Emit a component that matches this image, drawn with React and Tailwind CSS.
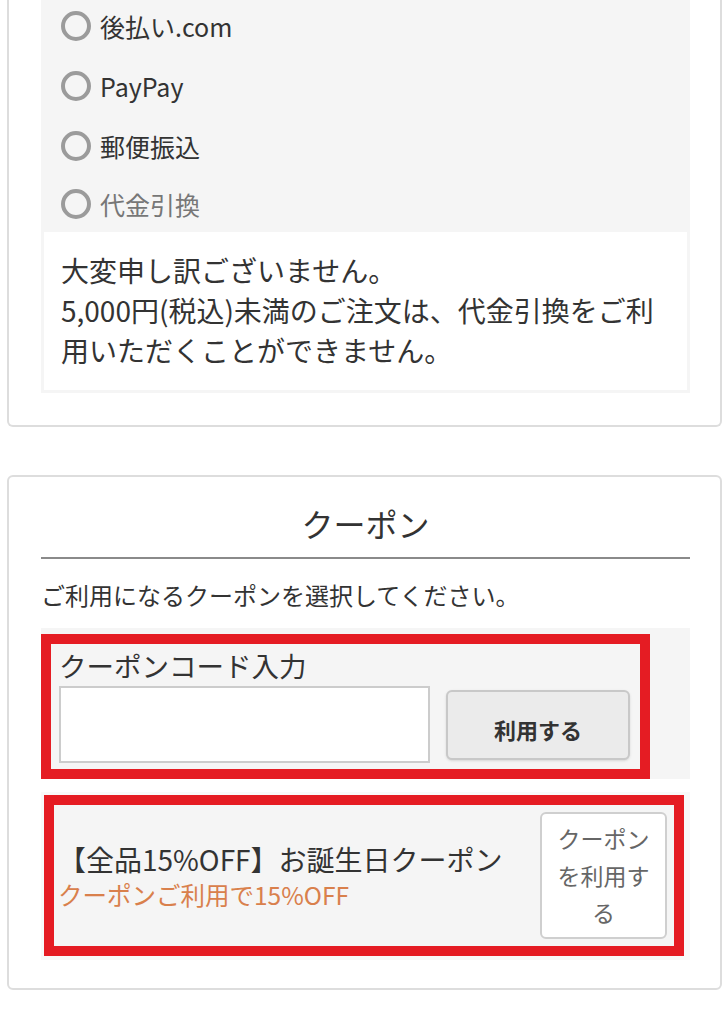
import React from 'react';

const font = { fontFamily: '"Noto Sans CJK JP", "Noto Sans", sans-serif' };

const methods = [
  { label: '後払い.com' },
  { label: 'PayPay' },
  { label: '郵便振込' },
  { label: '代金引換', disabled: true },
];

function Radio({ label, disabled, last }) {
  return (
    <label className={`flex items-center gap-[9px] pl-[17px] ${last ? 'h-[56px]' : 'h-[60px]'}`}>
      <span className="w-[30px] h-[30px] rounded-full border-[4px] border-[#9b9b9b] bg-[#f5f5f5] shrink-0" />
      <span className={`text-[25px] leading-[32px] ${disabled ? 'text-[#777]' : 'text-[#333]'}`}>{label}</span>
    </label>
  );
}

export default function App() {
  return (
    <div className="w-[725px] min-h-[1016px] bg-white text-[#333]" style={font}>
      {/* お支払い方法 (上部は画面外) */}
      <div className="ml-[7px] mr-[3px] border-x-2 border-b-2 border-[#dddddd] rounded-b-md pt-[4px] pl-[32px] pr-[30px] pb-[32px]">
        <div className="bg-[#f5f5f5] px-[3px] pb-[3px]">
          <div className="-mt-2">
            {methods.map((m, i) => (
              <Radio key={m.label} {...m} last={i === methods.length - 1} />
            ))}
          </div>
          <div className="bg-white pl-[17px] pr-[10px] pt-[18px] pb-[20px] text-[28px] leading-[40px] text-[#333]">
            <p>大変申し訳ございません。</p>
            <p>5,000円(税込)未満のご注文は、代金引換をご利用いただくことができません。</p>
          </div>
        </div>
      </div>

      {/* クーポン */}
      <div className="mt-[48px] ml-[7px] mr-[3px] border-2 border-[#dddddd] rounded-md pt-[22px] pl-[32px] pr-[30px] pb-[28px]">
        <h2 className="text-center text-[32px] leading-[48px] text-[#333]">クーポン</h2>
        <div className="mt-[10px] h-[2px] bg-[#8a8a8a]" />
        <p className="mt-[18px] text-[24px] leading-[36px] text-[#333]">ご利用になるクーポンを選択してください。</p>

        <div className="mt-[15px] bg-[#f5f5f5] pt-[6px] pr-[40px]">
          <div className="border-[10px] border-[#e51c23] pt-[3px] pb-[6px] pl-[8px] pr-[3px]">
            <div className="text-[27.5px] leading-[36px] text-[#333]">クーポンコード入力</div>
            <div className="mt-[3px] flex items-center gap-[16px]">
              <input type="text" className="w-[371px] h-[77px] bg-white border-2 border-[#cccccc] outline-none" />
              <button className="w-[184px] h-[70px] bg-[#ebebeb] border-2 border-[#c8c8c8] rounded-md shadow-sm pt-[10px] text-[22px] font-bold text-[#333]">
                利用する
              </button>
            </div>
          </div>
        </div>

        <div className="mt-[13px] bg-[#f9f9f9] pt-[3px] pl-[3px] pr-[6px] pb-[4px]">
          <div className="border-[10px] border-[#e51c23] bg-[#f5f5f5] flex items-center pl-[4px] pr-[7px] py-[7px]">
            <div className="flex-1">
              <div className="text-[28px] leading-[38px] text-[#333]">【全品15%OFF】お誕生日クーポン</div>
              <div className="text-[24.5px] leading-[34px] text-[#d9804c]">クーポンご利用で15%OFF</div>
            </div>
            <button className="w-[127px] h-[127px] bg-white border-2 border-[#cfcfcf] rounded-md px-[10px] text-[23px] leading-[37px] text-[#666]">
              クーポンを利用する
            </button>
          </div>
        </div>
      </div>
    </div>
  );
}
